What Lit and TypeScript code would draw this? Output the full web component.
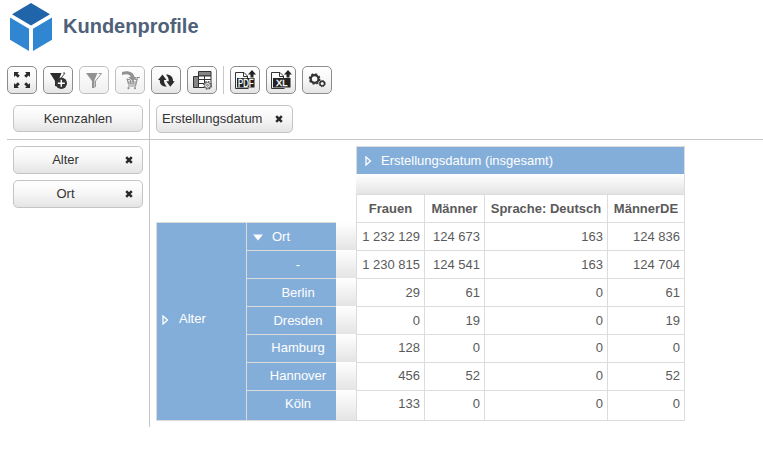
import { LitElement, html, svg, css, nothing } from "lit";
import { customElement } from "lit/decorators.js";
import { classMap } from "lit/directives/class-map.js";

const icons: Record<string, unknown> = {
  expand: svg`<path fill="#2b2b2b" d="M7 6h5l-1.500 1.500 2.300 2.300-2 2-2.300-2.300L7 11zM23 6v5l-1.500-1.500-2.300 2.300-2-2 2.300-2.300L18 6zM7 22v-5l1.500 1.500 2.300-2.300 2 2-2.300 2.300L12 22zM23 22h-5l1.500-1.500-2.300-2.300 2-2 2.300 2.300L23 17z"/>`,
  filterAdd: svg`<path d="M7 7h11.500l-2.500 6v8l-4-1v-5z" fill="#2b2b2b"/><path d="M20 7h2l-5.500 7.500" stroke="#555" fill="none"/><circle cx="18.300" cy="17.300" r="5.700" fill="#333"/><path d="M14.800 17.300h7M18.300 13.800v7" stroke="#fff" stroke-width="1.500"/>`,
  filter: svg`<path d="M7 7h11.500l-3 7v8h-2.500v-7z" fill="#929292"/><path d="M19.500 7.500h3l-6 7.500v6" stroke="#999" fill="none"/>`,
  cart: svg`<path d="M7 6c6-2 11.500 0 12.500 5h2.500l-4 4.500-5-4.500h2.700C15 8.500 12 7.500 7 9z" fill="#929292"/><path d="M25 11.500h-2.500l-2 8.500h-7.500M12 12.500l1.500 5.500h7.500M12 13.500h3M20 13.500h2M13 16h9M15.500 14v4M18 15v3" fill="none" stroke="#929292" stroke-width="1.200"/><circle cx="13.500" cy="22.200" r="1.100" fill="#929292"/><circle cx="20" cy="22.200" r="1.100" fill="#929292"/>`,
  refresh: svg`<g fill="#2b2b2b"><path d="M11.500 8.500l4 5.500h-2.500c0 2.500.8 4.500 2.800 6.700-4.500 0-7.300-2.200-7-6.700H7z"/><path d="M19.300 20.800l-4-5.500h2.500c0-2.500-.8-4.700-2.800-6.900 4.500 0 7.300 2.400 7 6.900h1.800z"/></g>`,
  table: svg`<path d="M11.500 5.500h12.500v4.500h-12.500zM6.500 10.500h5v11h-5z" fill="#858585" stroke="#333"/><path d="M11.500 10h12.500v11.500h-12.500zM17.500 10v11M11.500 13.500h12.500M11.500 17.500h8" fill="#fff" stroke="#333"/><circle cx="20.500" cy="19.300" r="3.600" fill="#eee" stroke="#555" stroke-width="1.700" stroke-dasharray="1.600 1.227"/><circle cx="20.500" cy="19.300" r="2.900" fill="#eee" stroke="#666"/><circle cx="20.500" cy="19.300" r=".9" fill="#fff" stroke="#666"/>`,
  gears: svg`<g fill="none" stroke="#333"><circle cx="12.600" cy="13" r="3.900" stroke-width="2.300"/><circle cx="12.600" cy="13" r="5.100" stroke-width="1.500" stroke-dasharray="2 2.005"/><circle cx="20.200" cy="17.600" r="2.300" stroke-width="1.500"/><circle cx="20.200" cy="17.600" r="3.100" stroke-width="1" stroke-dasharray="1.200 1.235"/></g>`,
};

const exportIcon = (label: string, width: number, size: string) => svg`
  <path d="M18.500 22.500H5.500v-16h8.500l3.500 3.500v2M13.500 6.500v4h4" fill="none" stroke="#333"/>
  <path d="M22 4l-4 4.500h2.500v3h3v-3H26z" fill="#222"/>
  <rect x="7" y="12" width="17.500" height="9.500" fill="#222"/>
  <text class=${"tag " + size} x="8" dx=${(15.500 - width) / 2} y=${size === "big" ? 20.500 : 20} textLength=${width} lengthAdjust="spacingAndGlyphs">${label}</text>`;

@customElement("tool-button")
export class ToolButton extends LitElement {
  static properties = {
    icon: { type: String },
    disabled: { type: Boolean, reflect: true },
  };
  declare icon: string;
  declare disabled: boolean;
  static styles = css`
    :host { display: block; }
    .btn {
      box-sizing: border-box; display: block; width: 30px; height: 28px; padding: 0;
      border: 1px solid #8c8c8c; border-radius: 5px; overflow: hidden;
      background: linear-gradient(#fff, #f7f7f7 50%, #e4e4e4);
    }
    .off { border-color: #bfbfbf; background: linear-gradient(#fff, #f0f0f0); }
    svg { display: block; margin: -1px; }
    .tag { font: 10.500px "Liberation Sans", Arial, sans-serif; fill: #fff; stroke: #fff; stroke-width: 0.300px; }
    .small { font-size: 8.500px; }
  `;
  render() {
    const shape = this.icon === "pdf" ? exportIcon("PDF", 15.5, "big")
      : this.icon === "xl" ? exportIcon("XL", 11.5, "small") : icons[this.icon];
    return html`<button class=${classMap({ btn: true, off: this.disabled })}>
      <svg width="30" height="28" viewBox="0 0 30 28">${shape}</svg></button>`;
  }
}

const rows = [
  ["Ort", "1 232 129", "124 673", "163", "124 836"],
  ["-", "1 230 815", "124 541", "163", "124 704"],
  ["Berlin", "29", "61", "0", "61"],
  ["Dresden", "0", "19", "0", "19"],
  ["Hamburg", "128", "0", "0", "0"],
  ["Hannover", "456", "52", "0", "52"],
  ["Köln", "133", "0", "0", "0"],
];
const measures = ["Frauen", "Männer", "Sprache: Deutsch", "MännerDE"];

const closed = html`<svg class="arrow" width="7" height="10" viewBox="0 0 7 10"><path d="M1 1v8l4.500-4z" fill="none" stroke="#fff" stroke-width="1.300"/></svg>`;
const opened = html`<svg class="arrow" width="10" height="7" viewBox="0 0 10 7"><path d="M0 .5h10L5 6.500z" fill="#fff"/></svg>`;
const cross = html`<svg class="x" width="8" height="8" viewBox="0 0 8 8"><path d="M1.200 1.200l5.600 5.600M6.800 1.200L1.200 6.800" stroke="#2a2a2a" stroke-width="2.500"/></svg>`;

@customElement("app-root")
export class AppRoot extends LitElement {
  static styles = css`
    :host {
      display: block; width: 763px; height: 456px; overflow: hidden; background: #fff;
      font: 13px/15px "Liberation Sans", Arial, sans-serif; color: #5a5a5a;
    }
    .head { display: flex; height: 63px; padding: 3px 0 0 10px; }
    .head h1 { margin: 11px 0 0 11px; font-size: 20px; line-height: 24px; color: #4f6179; }
    .tools { display: flex; gap: 6px; padding-left: 7px; height: 33px; }
    .sep { width: 1px; height: 28px; background: #c8c8c8; }
    .board { display: grid; grid-template: 40px 288px / 142px 614px; margin-left: 7px; }
    .board > * { box-sizing: border-box; }
    .corner, .rowdims { border-right: 1px solid #c6c6c6; }
    .corner { width: 143px; padding: 6px 0 0 6px; }
    .corner, .coldims { height: 41px; border-bottom: 1px solid #c6c6c6; }
    .coldims { padding: 6px 0 0 7px; }
    .rowdims { width: 143px; padding: 7px 0 0 6px; display: flex; flex-direction: column; gap: 6px; }
    .chip {
      box-sizing: border-box; display: flex; align-items: center; width: 130px; height: 28px;
      border: 1px solid #c4c4c4; border-radius: 5px; color: #333;
      background: linear-gradient(#fff, #f6f6f6 50%, #e4e4e4); padding: 0 9px 1px 0;
    }
    .chip span { flex: 1; text-align: center; }
    .chip.plain { height: 27px; padding-right: 0; }
    .chip.wide { width: 137px; padding-left: 5px; }
    .chip.wide span { text-align: left; }
    .chip.side span { padding-right: 8px; }
    .pivot {
      display: grid; margin: 7px 0 0 7px;
      grid-template-columns: 90px 90px 20px 68px 60px 123px 78px;
      grid-template-rows: 28px 20px 28px repeat(6, 28px) 31px;
    }
    .pivot > div { box-sizing: border-box; }
    .cell { border: solid #dcdcdc; border-width: 1px 0 0 1px; padding: 6px 4px 0 0; text-align: right; white-space: nowrap; }
    .cell.low { padding-top: 5px; }
    .last { border-right-width: 1px; }
    .bottom { border-bottom-width: 1px; }
    .name { padding-right: 0; text-align: center; font-weight: bold; }
    .blue { background: #84aeda; color: #fff; padding-right: 0; }
    .span { grid-column: 4 / 8; display: flex; text-align: left; padding-left: 8px; }
    .span .arrow { margin: 3px 9px 0 0; }
    .bar { grid-column: 4 / 8; border-right: 1px solid #dcdcdc; }
    .bar, .shade { background: linear-gradient(#fff, #e4e4e4); }
    .blank { grid-column: 1 / 4; }
    .outer { grid-row: 4 / 11; grid-column: 1; display: flex; align-items: center; padding: 0 0 6px 5px; }
    .outer .arrow { margin: 3px 10px 0 0; }
    .member { text-align: center; padding-left: 13px; }
    .group { display: flex; padding-left: 6px; }
    .group .arrow { margin: 5px 9px 0 0; }
    .shade.bottom { border-bottom: 1px solid #dcdcdc; }
  `;
  render() {
    return html`
      <header class="head">
        <svg width="42" height="48" viewBox="0 0 42 48">
          <path d="M21 0l19 11.300-19 11.200L2 11.300z" fill="#2064a9"/>
          <path d="M0 14.500l19 11.300V48L0 36.700zM42 14.500L23 25.800V48l19-11.300z" fill="#3086d1"/>
        </svg>
        <h1>Kundenprofile</h1>
      </header>
      <nav class="tools">
        ${["expand", "filterAdd", "filter", "cart", "refresh", "table"].map((i) => html`
          <tool-button icon=${i} ?disabled=${i === "filter" || i === "cart"}></tool-button>`)}
        <i class="sep"></i>
        ${["pdf", "xl", "gears"].map((i) => html`<tool-button icon=${i}></tool-button>`)}
      </nav>
      <main class="board">
        <div class="corner"><div class="chip plain"><span>Kennzahlen</span></div></div>
        <div class="coldims"><div class="chip wide"><span>Erstellungsdatum</span>${cross}</div></div>
        <div class="rowdims">
          ${["Alter", "Ort"].map((d) => html`<div class="chip side"><span>${d}</span>${cross}</div>`)}
        </div>
        <div class="pivot">
          <div class="blank"></div>
          <div class="cell blue span last">${closed}Erstellungsdatum (insgesamt)</div>
          <div class="blank"></div>
          <div class="bar"></div>
          <div class="blank"></div>
          ${measures.map((m, i) => html`<div class=${classMap({ cell: true, name: true, last: i === 3 })}>${m}</div>`)}
          <div class="cell blue outer bottom">${closed}Alter</div>
          ${rows.map(([label, ...values], r) => {
            const low = r > 3, bottom = r === 6;
            return html`
              <div class=${classMap({ cell: true, blue: true, group: r === 0, member: r > 0, low, bottom })}>${r === 0 ? opened : nothing}${label}</div>
              <div class=${classMap({ shade: true, bottom })}></div>
              ${values.map((v, i) => html`<div class=${classMap({ cell: true, low, bottom, last: i === 3 })}>${v}</div>`)}`;
          })}
        </div>
      </main>`;
  }
}
